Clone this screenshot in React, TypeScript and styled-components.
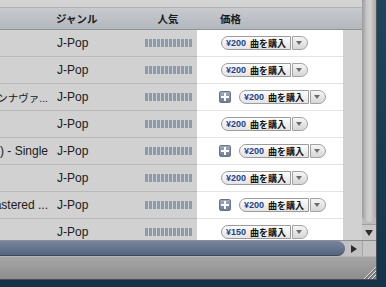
import React from 'react';
import styled, { createGlobalStyle } from 'styled-components';

const GlobalStyle = createGlobalStyle`
    html, body {
        margin: 0;
        padding: 0;
        overflow: hidden;
        background: #183a50;
    }
    body {
        font-family: "Liberation Sans", "Noto Sans CJK JP", sans-serif;
    }
`

const Desktop = styled.div`
    width: 386px;
    height: 287px;
    overflow: hidden;
    background: linear-gradient(#1f455c, #143348);
`
const Window = styled.div`
    width: 377px;
    height: 280px;
    box-sizing: border-box;
    border-right: 1px solid #4c5358;
    border-bottom: 1px solid #4a4f53;
    display: flex;
    flex-direction: column;
    background: #fff;
`
const Main = styled.div`
    display: flex;
    height: 240px;
`
const TableArea = styled.div`
    width: 362px;
    display: flex;
    flex-direction: column;
`
const TopStrip = styled.div`
    height: 7px;
    background: #d3d3d3;
    border-bottom: 1px solid #b2b2b2;
`
const COLS = '52px 89px 54px 148px';

const HeaderRow = styled.div`
    display: grid;
    grid-template-columns: ${COLS} 1fr;
    height: 21px;
    background: linear-gradient(#c7cace, #b3b8bc);
    border-bottom: 1px solid #8d949b;
`
const HeaderCell = styled.div<{ $pad?: number; $center?: boolean }>`
    display: flex;
    align-items: center;
    justify-content: ${(p) => (p.$center ? 'center' : 'flex-start')};
    padding-left: ${(p) => p.$pad ?? 0}px;
    font-family: "Noto Sans CJK JP", sans-serif;
    font-size: 10.5px;
    font-weight: bold;
    color: #1a1a1a;
`
const Body = styled.div`
    position: relative;
    flex: 1;
    overflow: hidden;
    background: #fff;
`
const Row = styled.div`
    display: grid;
    grid-template-columns: ${COLS};
    width: 343px;
    height: 26px;
    border-bottom: 1px solid #e3e3e3;
    font-size: 12px;
    color: #262626;
`
const NameCell = styled.div<{ $jp?: boolean }>`
    display: flex;
    align-items: center;
    justify-content: flex-end;
    overflow: hidden;
    white-space: nowrap;
    padding-right: 4px;
    font-size: ${(p) => (p.$jp ? '10.5px' : '12px')};
`
const GenreCell = styled.div`
    display: flex;
    align-items: center;
    padding-left: 5px;
`
const RatingCell = styled.div`
    display: flex;
    align-items: center;
    justify-content: center;
`
const Bars = styled.div`
    display: flex;
    gap: 1px;
`
const Bar = styled.span`
    width: 3px;
    height: 8px;
    background: #aabdd1;
`
const PriceCell = styled.div<{ $add?: boolean }>`
    display: flex;
    align-items: center;
    gap: 8px;
    padding-left: ${(p) => (p.$add ? 24 : 26)}px;
`
const AddIcon = styled.div`
    width: 12px;
    height: 12px;
    box-sizing: border-box;
    border-radius: 2px;
    border: 1px solid #66758d;
    background: linear-gradient(#9dabc0, #6e7e98);
    display: flex;
    align-items: center;
    justify-content: center;
`
const Buy = styled.div`
    display: flex;
    height: 14px;
    gap: 1px;
`
const BuyMain = styled.div`
    display: flex;
    align-items: center;
    gap: 4px;
    padding: 0 4px 0 4px;
    border: 1px solid #9b9b9b;
    border-radius: 7px 0 0 7px;
    background: linear-gradient(#fdfdfd, #e4e4e4);
    font-size: 9px;
    font-weight: bold;
    line-height: 1;
`
const Price = styled.span`
    color: #1b418f;
`
const BuyLabel = styled.span`
    color: #111;
    font-family: "Noto Sans CJK JP", sans-serif;
`
const BuyArrow = styled.div`
    width: 14px;
    border: 1px solid #a2a2a2;
    border-radius: 0 7px 7px 0;
    background: linear-gradient(#f6f6f6, #d6d6d6);
    display: flex;
    align-items: center;
    justify-content: center;
    &::after {
        content: '';
        border-left: 3px solid transparent;
        border-right: 3px solid transparent;
        border-top: 4px solid #6d6d6d;
        margin-right: 2px;
    }
`
const Spotlight = styled.div`
    position: absolute;
    top: -20px;
    bottom: -20px;
    left: 197px;
    width: 146px;
    box-shadow: 0 0 11px 9999px rgba(0, 0, 0, 0.18);
    pointer-events: none;
`
const VScroll = styled.div`
    width: 14px;
    display: flex;
    flex-direction: column;
    background: #bcbcbc;
`
const VThumb = styled.div`
    height: 222px;
    border-radius: 0 0 7px 7px;
    background: linear-gradient(to right, #9a9a9a, #c9c9c9 35%, #d0d0d0 60%, #a9a9a9);
`
const VArrow = styled.div`
    margin-top: auto;
    height: 15px;
    border-top: 1px solid #a0a0a0;
    background: #c8c8c8;
    display: flex;
    align-items: center;
    justify-content: center;
    &::after {
        content: '';
        border-left: 4px solid transparent;
        border-right: 4px solid transparent;
        border-top: 6px solid #2c2c2c;
    }
`
const HScrollRow = styled.div`
    display: flex;
    height: 16px;
    border-top: 1px solid #8a8f94;
    box-sizing: border-box;
`
const HTrack = styled.div`
    width: 362px;
    display: flex;
    background: #c2c2c2;
`
const HThumb = styled.div`
    width: 345px;
    border-radius: 0 8px 8px 0;
    border-bottom: 1px solid #3d4b5e;
    background: linear-gradient(#75859d, #66768f 50%, #55657d);
`
const HArrow = styled.div`
    flex: 1;
    display: flex;
    align-items: center;
    justify-content: center;
    &::after {
        content: '';
        border-top: 4px solid transparent;
        border-bottom: 4px solid transparent;
        border-left: 6px solid #2c2c2c;
    }
`
const Corner = styled.div`
    flex: 1;
    background: #c6c6c6;
    border-left: 1px solid #a4a4a4;
`
const StatusBar = styled.div`
    flex: 1;
    display: flex;
    justify-content: flex-end;
    align-items: flex-end;
    border-top: 1px solid #b5b5b5;
    background: linear-gradient(#a6a6a6, #8d8d8d);
`

const Grip = () => (
    <svg width="13" height="13" viewBox="0 0 13 13">
        {[1, 5, 9].map((o) => (
            <g key={o}>
                <line x1={13} y1={o} x2={o} y2={13} stroke="#e0e0e0" strokeWidth="1" />
                <line x1={13} y1={o + 1.2} x2={o + 1.2} y2={13} stroke="#5e5e5e" strokeWidth="1" />
            </g>
        ))}
    </svg>
)

const Plus = () => (
    <svg width="8" height="8" viewBox="0 0 8 8">
        <rect x="3" y="0" width="2" height="8" fill="#fff" />
        <rect x="0" y="3" width="8" height="2" fill="#fff" />
    </svg>
)

type Track = { name: string; jp?: boolean; price: string; add: boolean };

const rows: Track[] = [
    { name: '', price: '¥200', add: false },
    { name: '', price: '¥200', add: false },
    { name: 'サンナヴァ...', jp: true, price: '¥200', add: true },
    { name: '', price: '¥200', add: false },
    { name: '(Remix) - Single', price: '¥200', add: true },
    { name: '', price: '¥200', add: false },
    { name: '(Remastered ...', price: '¥200', add: true },
    { name: '', price: '¥150', add: false },
];

export default function App() {
    return (
        <>
            <GlobalStyle />
            <Desktop>
                <Window>
                    <Main>
                        <TableArea>
                            <TopStrip />
                            <HeaderRow>
                                <HeaderCell />
                                <HeaderCell $pad={4}>ジャンル</HeaderCell>
                                <HeaderCell $center>人気</HeaderCell>
                                <HeaderCell $pad={25}>価格</HeaderCell>
                            </HeaderRow>
                            <Body>
                                {rows.map((r, i) => (
                                    <Row key={i}>
                                        <NameCell $jp={r.jp}>{r.name}</NameCell>
                                        <GenreCell>J-Pop</GenreCell>
                                        <RatingCell>
                                            <Bars>
                                                {Array.from({ length: 12 }).map((_, j) => (
                                                    <Bar key={j} />
                                                ))}
                                            </Bars>
                                        </RatingCell>
                                        <PriceCell $add={r.add}>
                                            {r.add && (
                                                <AddIcon>
                                                    <Plus />
                                                </AddIcon>
                                            )}
                                            <Buy>
                                                <BuyMain>
                                                    <Price>{r.price}</Price>
                                                    <BuyLabel>曲を購入</BuyLabel>
                                                </BuyMain>
                                                <BuyArrow />
                                            </Buy>
                                        </PriceCell>
                                    </Row>
                                ))}
                                <Spotlight />
                            </Body>
                        </TableArea>
                        <VScroll>
                            <VThumb />
                            <VArrow />
                        </VScroll>
                    </Main>
                    <HScrollRow>
                        <HTrack>
                            <HThumb />
                            <HArrow />
                        </HTrack>
                        <Corner />
                    </HScrollRow>
                    <StatusBar>
                        <Grip />
                    </StatusBar>
                </Window>
            </Desktop>
        </>
    );
}
